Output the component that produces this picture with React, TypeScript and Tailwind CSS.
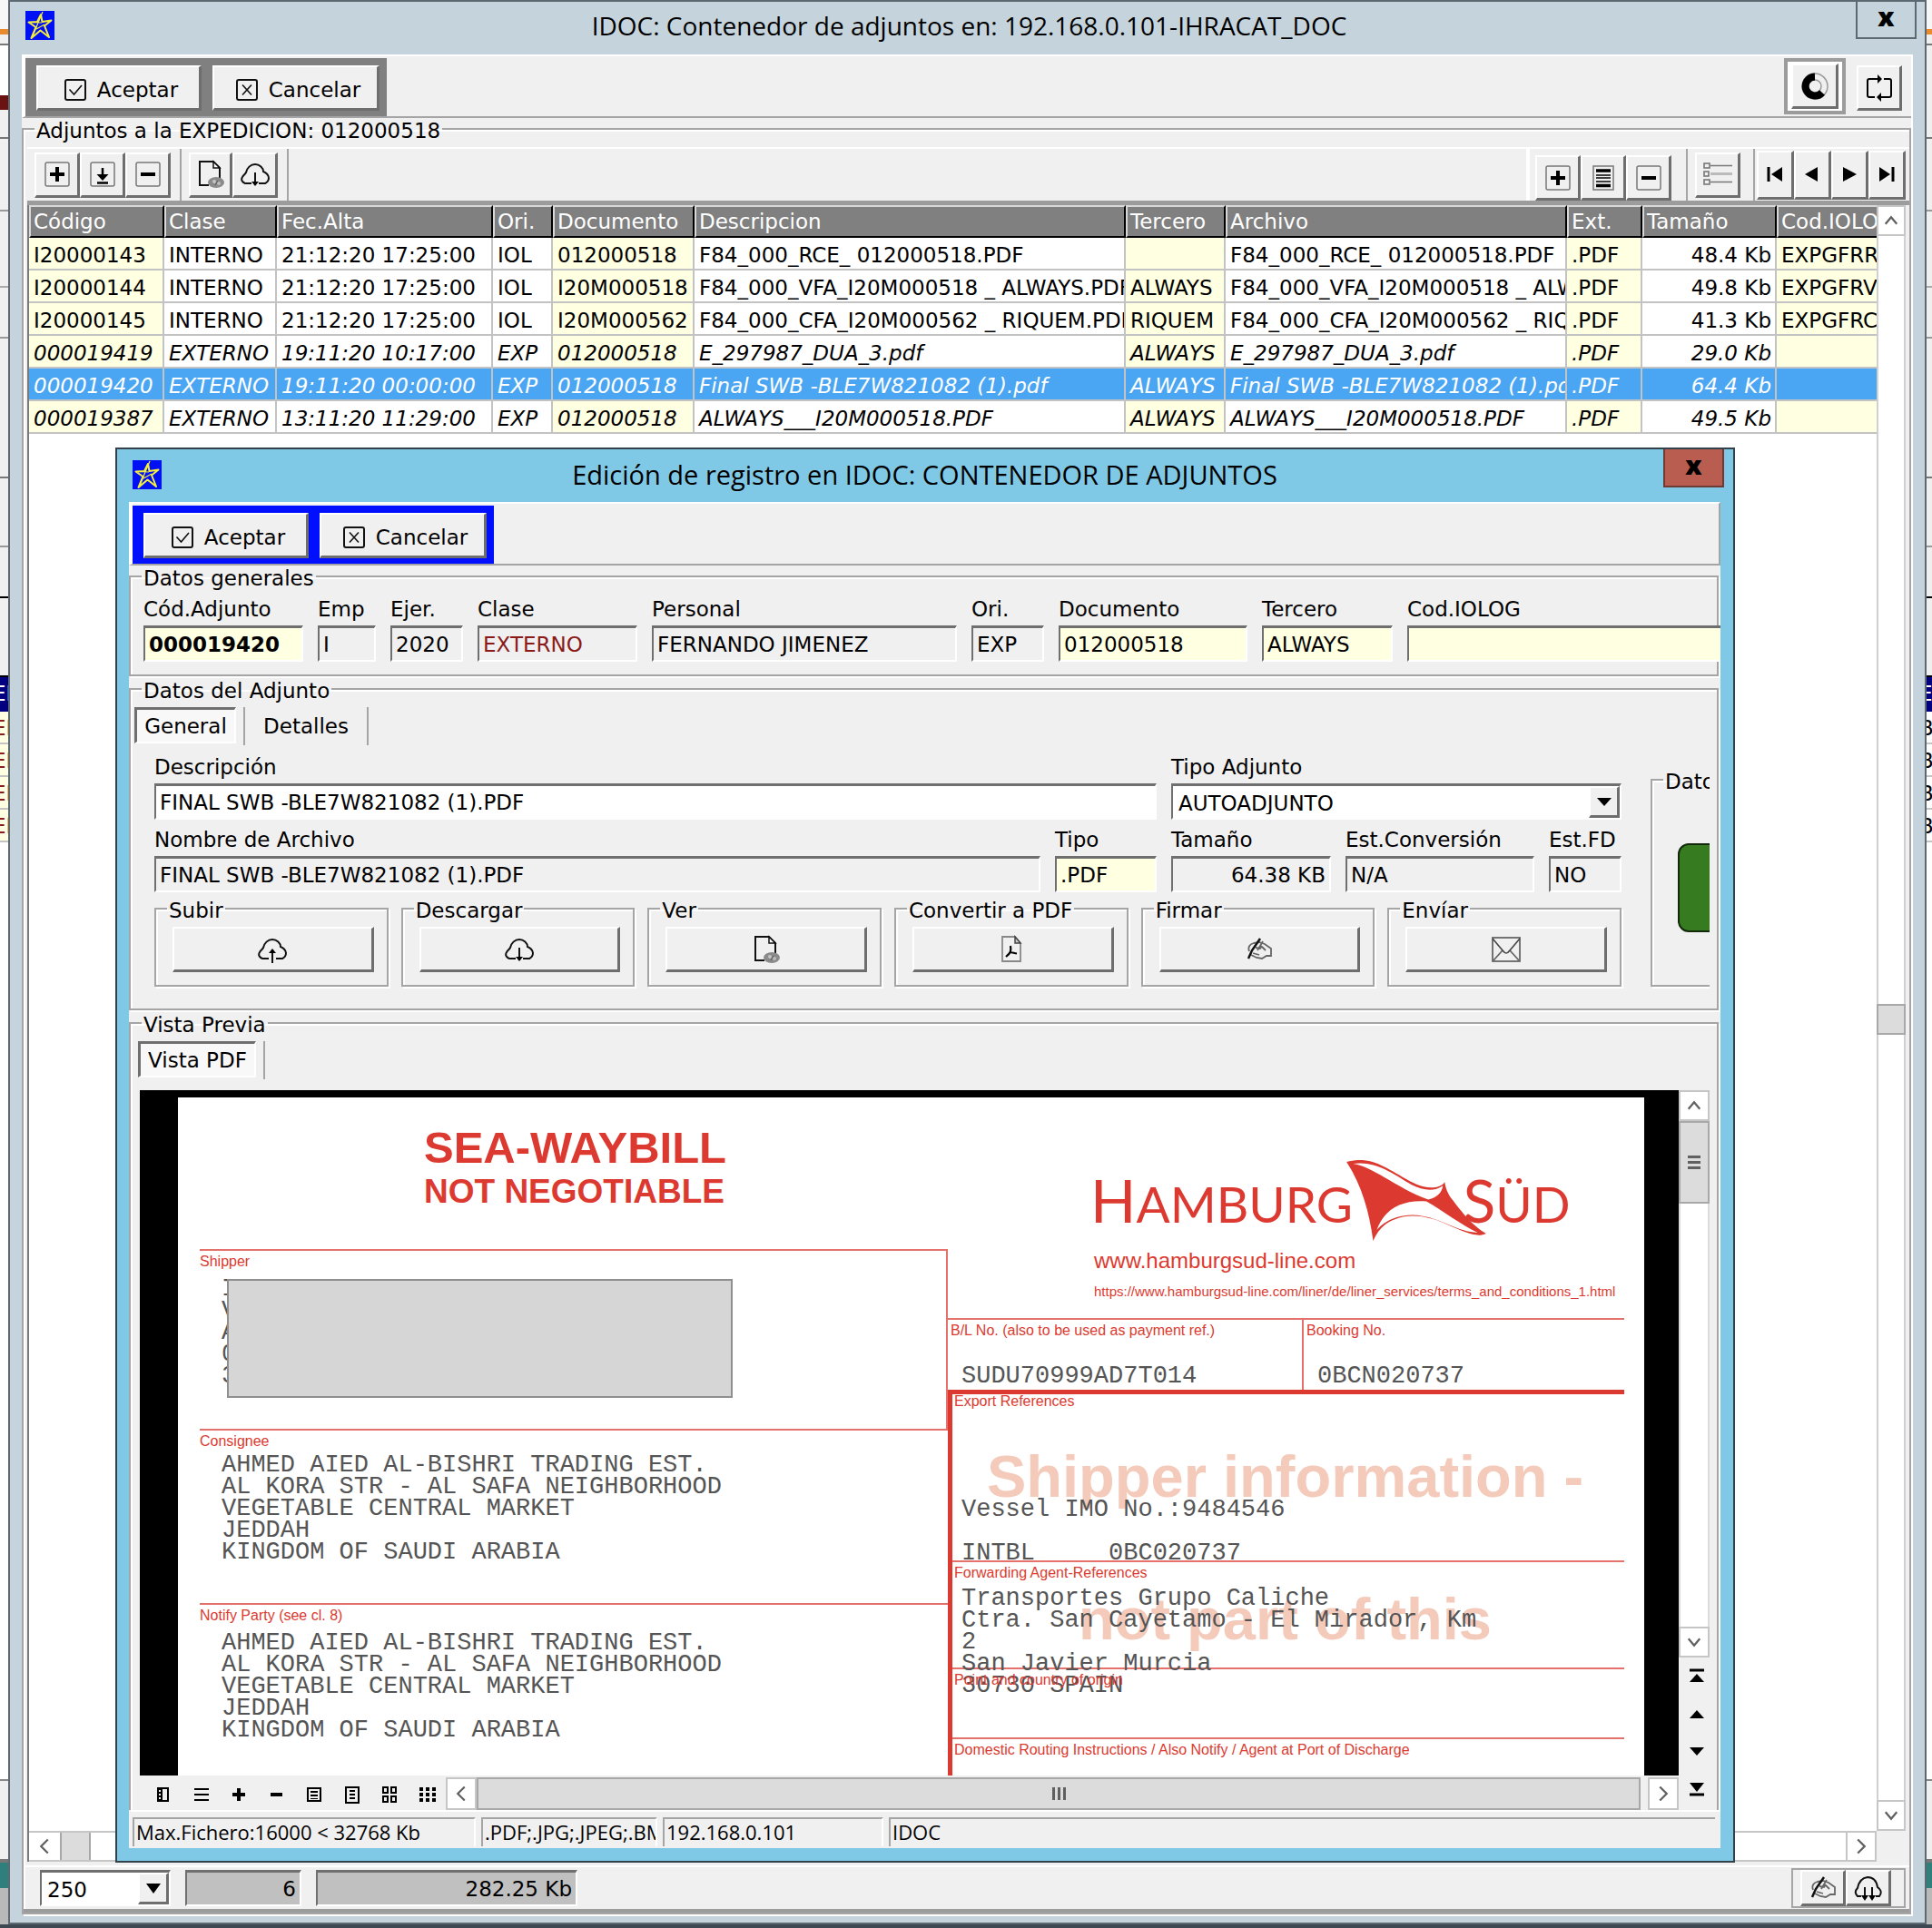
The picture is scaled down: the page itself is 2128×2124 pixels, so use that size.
import React, { useState } from 'react';

const ui = 'font-["DejaVu_Sans",sans-serif] text-[23px] leading-6 text-black';
const raised = 'bg-[#f0f0f0] border-t-2 border-l-2 border-t-white border-l-white border-b-[3px] border-r-[3px] border-b-[#6e6e6e] border-r-[#6e6e6e] flex items-center justify-center shrink-0';
const sunken = 'border-t-[3px] border-l-2 border-t-[#6f6f6f] border-l-[#6f6f6f] border-r-2 border-b-2 border-r-white border-b-white';

/* ---------- Icons ---------- */

const StarIcon = () => (
  <svg className="w-8 h-8 shrink-0 bg-[#0010f5]" viewBox="0 0 32 32" fill="none" stroke="#f5ee3c" strokeWidth="2" strokeLinejoin="round">
    <path d="M17 4l1.500 8 10-1.500-7.500 6 5 12.500-9.500-7.500-10 8.500 5-12-8-5.500 9.500-.5z" />
    <path d="M19 1l-5 12-7 17M4 12.500l14 .5M12 20l9-5" strokeWidth="1.200" />
  </svg>
);

const CheckBoxIcon = () => (
  <svg className="w-6 h-6 shrink-0" viewBox="0 0 24 24" fill="none" stroke="#111">
    <rect x="1" y="1" width="22" height="22" rx="2" strokeWidth="2" />
    <path d="M5.500 11.500l5 5.500 8.500-10" strokeWidth="1.600" />
  </svg>
);

const CrossBoxIcon = () => (
  <svg className="w-6 h-6 shrink-0" viewBox="0 0 24 24" fill="none" stroke="#111">
    <rect x="1" y="1" width="22" height="22" rx="2" strokeWidth="2" />
    <path d="M7 6.500l10 11M17 6.500l-10 11" strokeWidth="1.600" />
  </svg>
);

const BoxIcon = ({ children }: { children: React.ReactNode }) => (
  <svg className="w-7 h-7" viewBox="0 0 28 28">
    <rect x="1" y="1" width="26" height="26" rx="2" fill="none" stroke="#777" strokeWidth="1.500" />
    {children}
  </svg>
);
const PlusIcon = () => <BoxIcon><path d="M6 14h16M14 6v16" stroke="#000" strokeWidth="4" /></BoxIcon>;
const MinusIcon = () => <BoxIcon><path d="M6 14h16" stroke="#000" strokeWidth="4" /></BoxIcon>;
const InsertIcon = () => (
  <BoxIcon><path d="M14 7v9M8 23.500h12" stroke="#000" strokeWidth="2.500" /><path d="M7.500 14h13L14 21z" /></BoxIcon>
);
const RowsIcon = () => (
  <svg className="w-7 h-7" viewBox="0 0 28 28">
    <rect x="3" y="1" width="22" height="26" fill="none" stroke="#777" strokeWidth="1.500" />
    <path d="M6 6h16M6 22.500h16" stroke="#000" strokeWidth="3.500" />
    <path d="M6 11h16M6 14h16M6 18h16" stroke="#000" strokeWidth="1.400" />
  </svg>
);

const DocEyeIcon = () => (
  <svg className="w-8 h-8" viewBox="0 0 32 32">
    <path d="M14 28H4V2h15l7 7v12" fill="none" stroke="#111" strokeWidth="2" />
    <path d="M19 2v7h7z" fill="#fff" stroke="#111" strokeWidth="1.500" />
    <ellipse cx="22" cy="25" rx="9" ry="6" fill="#8a8a8a" />
    <circle cx="20" cy="24" r="2" fill="#c4c4c4" /><circle cx="25" cy="26" r="2" fill="#bbb" /><path d="M21 28l3-5" stroke="#555" />
  </svg>
);

const Cloud = ({ children }: { children?: React.ReactNode }) => (
  <svg className="w-8 h-8" viewBox="0 0 32 32" fill="none" stroke="#111" strokeWidth="2">
    <path d="M12 26H5c-3-1-5-4-3-7 1-2 3-3 4-5 1-5 5-9 10-9s9 4 9 8c3 1 6 4 6 7s-2 5-4 6h-7" />
    {children}
  </svg>
);
const CloudDownIcon = () => <Cloud><path d="M16 14v12" /><path d="M12 24h8l-4 5z" fill="#000" stroke="none" /></Cloud>;
const CloudUpIcon = () => <Cloud><path d="M16 18v13" /><path d="M12 20h8l-4-5z" fill="#000" stroke="none" /></Cloud>;
const CloudSyncIcon = () => (
  <svg className="w-8 h-8" viewBox="0 0 32 32" fill="none" stroke="#111" strokeWidth="2">
    <path d="M8 25H4c-3-3-3-6 0-9 1-5 3-11 11-12 7 0 10 5 11 11 4 3 5 6 2 10h-4" />
    <path d="M12 15v11M20 15v11" /><path d="M8 24h8l-4 6zM16 24h8l-4 6z" fill="#000" stroke="none" />
  </svg>
);

const PdfIcon = () => (
  <svg className="w-8 h-8" viewBox="0 0 32 32" fill="none">
    <path d="M5 2h14l6 7v20H5z" stroke="#888" strokeWidth="1.800" />
    <path d="M19 2v7h6z" fill="#ccc" stroke="#444" strokeWidth="1.500" />
    <path d="M14 12c1 6 0 8-5 12M13 19c2 0 5 1 8 1.500" stroke="#000" strokeWidth="2.200" />
  </svg>
);

const SignIcon = () => (
  <svg className="w-8 h-8" viewBox="0 0 32 32" fill="none" stroke="#666" strokeWidth="1.800">
    <path d="M5 18c-2-5 1-8 5-9l6-1 6 2 7 5v9M7 22l6 3 6 1 5-3h5" />
    <path d="M17 4L8 17l-4 9" stroke="#111" strokeWidth="2.500" />
    <path d="M20 7l-6 10M12 14l5 1 2-3M19 13l4 4M9 20l7 2" />
  </svg>
);

const MailIcon = () => (
  <svg className="w-8 h-8" viewBox="0 0 32 32" fill="none" stroke="#666" strokeWidth="1.800">
    <rect x="1" y="3" width="30" height="26" />
    <path d="M2 28l10-11M30 28L20 17" />
    <path d="M1 4l11 13c3 4 5 4 8 0L31 4" stroke="#444" strokeWidth="1.600" />
  </svg>
);

const RingIcon = () => (
  <svg className="w-8 h-8" viewBox="0 0 32 32" fill="none">
    <circle cx="16" cy="16" r="14" stroke="#999" strokeWidth="1.500" />
    <circle cx="16" cy="16" r="7" stroke="#999" strokeWidth="1.500" />
    <path d="M16 5.500a10.500 10.500 0 1 0 8 17.500" stroke="#000" strokeWidth="8" />
  </svg>
);

const LoopIcon = () => (
  <svg className="w-8 h-8" viewBox="0 0 32 32" fill="none" stroke="#000" strokeWidth="2">
    <path d="M11 26H5a2 2 0 0 1-2-2V8a2 2 0 0 1 2-2h9M21 6h6a2 2 0 0 1 2 2v16a2 2 0 0 1-2 2h-9" />
    <path d="M14 1l5 5-5 5zM18 21l-5 5 5 5z" fill="#000" stroke="none" />
  </svg>
);

const ListIcon = () => (
  <svg className="w-8 h-7" viewBox="0 0 32 28" fill="none" stroke="#777" strokeWidth="1.600">
    <rect x="1" y="2" width="6" height="5" /><rect x="1" y="11" width="5" height="5" /><rect x="1" y="20" width="6" height="5" />
    <path d="M8 4.500h24M8 22.500h24" /><path d="M8 13.500h24" stroke="#bbb" strokeWidth="3" />
  </svg>
);

const Glyph = ({ d, line }: { d: string; line?: string }) => (
  <svg className="w-6 h-6 shrink-0" viewBox="0 0 24 24">
    <path d={d} fill="#000" />
    {line && <path d={line} stroke="#000" strokeWidth="3" fill="none" />}
  </svg>
);

const Chevron = ({ dir }: { dir: 'up' | 'down' | 'left' | 'right' }) => {
  const d = { up: 'M3 11l5-6 5 6', down: 'M3 5l5 6 5-6', left: 'M11 2l-6 6 6 6', right: 'M5 2l6 6-6 6' }[dir];
  return <svg className="w-5 h-5" viewBox="0 0 16 16" fill="none" stroke="#606060" strokeWidth="1.800"><path d={d} /></svg>;
};

const HamburgSudFlag = () => (
  <svg className="w-[158px] h-[91px]" viewBox="0 0 156 90" fill="#dc3a30">
    <path d="M1 2C12 -1 24 -1 35 4c22 9 38 25 58 26 7 0 12-2 15-6 1 8 4 14 9 20 12 16 22 28 36 36-10 5-24-2-36-7-22-11-44-16-62-9-12 4-20 12-25 24C26 58 18 28 1 2zm7 2c22 3 50 28 82 39 10-2 15-8 16-15-10 7-22 5-34-1C54 17 34 0 8 4zm26 72c10-12 30-19 50-15 20 3 38 17 60 18-18-8-38-24-56-34-26-2-46 8-54 31z" fillRule="evenodd" />
  </svg>
);

/* ---------- Shared pieces ---------- */

interface GroupProps {
  title: string;
  className?: string;
  legendClass?: string;
  children?: React.ReactNode;
}

const Group: React.FC<GroupProps> = ({ title, className = '', legendClass = 'ml-3', children }) => (
  <fieldset className={`min-w-0 border-2 border-[#a5a5a5] shadow-[2px_2px_0_#fff,inset_2px_2px_0_#fff] flex flex-col ${className}`}>
    <legend className={`${legendClass} h-6 pt-1 px-0.5 leading-5 whitespace-nowrap`}>{title}</legend>
    {children}
  </fieldset>
);

interface FieldProps {
  label: string;
  value: string;
  width: string;
  tone?: string;
  extra?: string;
}

const Field: React.FC<FieldProps> = ({ label, value, width, tone = 'bg-[#f0f0f0]', extra = '' }) => (
  <label className={`flex flex-col gap-1.5 min-w-0 ${width}`}>
    <span className="whitespace-nowrap">{label}</span>
    <input className={`${sunken} ${tone} ${extra} h-10 w-full px-1 outline-none`} defaultValue={value} />
  </label>
);

const OkCancel = ({ color }: { color: string }) => (
  <div className={`${color} flex gap-3 pl-3 pr-2 py-2`}>
    <button className={`${raised} w-[182px] h-[50px] gap-3 pl-1.5 pt-1`}><CheckBoxIcon />Aceptar</button>
    <button className={`${raised} w-[184px] h-[50px] gap-3 pl-1.5 pt-1`}><CrossBoxIcon />Cancelar</button>
  </div>
);

/* ---------- Grid of attachments ---------- */

const columns = ['Código', 'Clase', 'Fec.Alta', 'Ori.', 'Documento', 'Descripcion', 'Tercero', 'Archivo', 'Ext.', 'Tamaño', 'Cod.IOLOG'];
const yellowCols = [0, 4, 6, 8, 10];

const rows = [
  ['I20000143', 'INTERNO', '21:12:20 17:25:00', 'IOL', '012000518', 'F84_000_RCE_ 012000518.PDF', '', 'F84_000_RCE_ 012000518.PDF', '.PDF', '48.4 Kb', 'EXPGFRRCE'],
  ['I20000144', 'INTERNO', '21:12:20 17:25:00', 'IOL', 'I20M000518', 'F84_000_VFA_I20M000518 _ ALWAYS.PDF', 'ALWAYS', 'F84_000_VFA_I20M000518 _ ALWAYS.PDF', '.PDF', '49.8 Kb', 'EXPGFRVFA'],
  ['I20000145', 'INTERNO', '21:12:20 17:25:00', 'IOL', 'I20M000562', 'F84_000_CFA_I20M000562 _ RIQUEM.PDF', 'RIQUEM', 'F84_000_CFA_I20M000562 _ RIQUEM.PDF', '.PDF', '41.3 Kb', 'EXPGFRCFA'],
  ['000019419', 'EXTERNO', '19:11:20 10:17:00', 'EXP', '012000518', 'E_297987_DUA_3.pdf', 'ALWAYS', 'E_297987_DUA_3.pdf', '.PDF', '29.0 Kb', ''],
  ['000019420', 'EXTERNO', '19:11:20 00:00:00', 'EXP', '012000518', 'Final SWB -BLE7W821082 (1).pdf', 'ALWAYS', 'Final SWB -BLE7W821082 (1).pdf', '.PDF', '64.4 Kb', ''],
  ['000019387', 'EXTERNO', '13:11:20 11:29:00', 'EXP', '012000518', 'ALWAYS___I20M000518.PDF', 'ALWAYS', 'ALWAYS___I20M000518.PDF', '.PDF', '49.5 Kb', ''],
];

const AttachmentTable = () => {
  const [selected, setSelected] = useState(4);
  return (
    <table className="w-full table-fixed border-separate border-spacing-0">
      <colgroup>
        <col className="w-[149px]" /><col className="w-[124px]" /><col className="w-[238px]" /><col className="w-[66px]" />
        <col className="w-[156px]" /><col /><col className="w-[110px]" /><col className="w-[376px]" />
        <col className="w-[83px]" /><col className="w-[148px]" /><col className="w-[110px]" />
      </colgroup>
      <thead>
        <tr>
          {columns.map(c => (
            <th key={c} className="h-9 bg-[#808080] text-white text-left font-normal pl-[3px] overflow-hidden whitespace-nowrap border-t-2 border-l-2 border-t-[#d8d8d8] border-l-[#d8d8d8] border-b-2 border-r-2 border-b-black border-r-black last:border-r-0">{c}</th>
          ))}
        </tr>
      </thead>
      <tbody>
        {rows.map((r, ri) => (
          <tr key={r[0]} onClick={() => setSelected(ri)} className={`${ri > 2 ? 'italic' : ''} ${ri === selected ? 'bg-[#4aa5f2] text-white' : ''}`}>
            {r.map((cell, ci) => (
              <td key={ci} className={`h-9 pl-[5px] pt-[3px] overflow-hidden whitespace-nowrap border-b-2 border-r-2 border-[#c3c3c3] last:border-r-0 ${ci === 9 ? 'text-right pr-1' : ''} ${ri !== selected && yellowCols.includes(ci) ? 'bg-[#ffffe1]' : ''}`}>{cell}</td>
            ))}
          </tr>
        ))}
      </tbody>
    </table>
  );
};

/* ---------- Waybill preview ---------- */

const Caption = ({ children }: { children: React.ReactNode }) => (
  <div className='font-["Liberation_Sans",sans-serif] text-[16px] leading-6 text-[#dc3a30] whitespace-nowrap'>{children}</div>
);

const Typed = ({ lines, className = '' }: { lines: string[]; className?: string }) => (
  <div className={`font-["Liberation_Mono",monospace] text-[27px] leading-6 text-[#555] whitespace-pre ${className}`}>
    {lines.map((l, i) => <div key={i} className="h-6">{l}</div>)}
  </div>
);

const party = ['AHMED AIED AL-BISHRI TRADING EST.', 'AL KORA STR - AL SAFA NEIGHBORHOOD', 'VEGETABLE CENTRAL MARKET', 'JEDDAH', 'KINGDOM OF SAUDI ARABIA'];

const Waybill = () => (
  <div className='font-["Liberation_Sans",sans-serif] bg-white flex-1 h-full flex pl-6 pr-[22px] overflow-hidden'>
    <div className="w-[824px] shrink-0 flex flex-col">
      <div className="h-[167px] pt-7 pl-[247px] text-[#dc3a30] font-bold whitespace-nowrap">
        <div className="text-[49px] leading-[54px]">SEA-WAYBILL</div>
        <div className="text-[37px] leading-10 pt-0.5">NOT NEGOTIABLE</div>
      </div>
      <div className="h-[198px] border-t-2 border-r-2 border-[#e4716b]">
        <Caption>Shipper</Caption>
        <div className="relative">
          <Typed lines={['I', 'V', 'A', '0', '3']} className="pl-6 pt-1.5" />
          <div className="absolute left-[30px] top-[7px] w-[557px] h-[131px] bg-[#d6d6d6] border-2 border-[#8f8f8f]" />
        </div>
      </div>
      <div className="h-[192px] border-t-2 border-[#e4716b]">
        <Caption>Consignee</Caption>
        <Typed lines={party} className="pl-6 pt-0.5" />
      </div>
      <div className="border-t-2 border-[#e4716b]">
        <Caption>Notify Party (see cl. 8)</Caption>
        <Typed lines={party} className="pl-6 pt-1.5" />
      </div>
    </div>
    <div className="flex-1 min-w-0 flex flex-col text-[#dc3a30] relative">
      <div className="h-[243px] pt-[70px] pl-[161px] whitespace-nowrap">
        <div className='font-["Lato",sans-serif] flex items-baseline h-[86px] leading-[86px] relative -ml-1'>
          <span className="text-[66px]">H</span><span className="text-[55px] w-[360px]">AMBURG</span>
          <span className="text-[66px]">S</span><span className="text-[55px]">ÜD</span>
          <div className="absolute left-[281px] -top-px"><HamburgSudFlag /></div>
        </div>
        <div className="text-[24px] leading-6 pt-3">www.hamburgsud-line.com</div>
        <div className="text-[15px] leading-6 pt-2.5">https://www.hamburgsud-line.com/liner/de/liner_services/terms_and_conditions_1.html</div>
      </div>
      <div className="h-[79px] flex border-t-2 border-[#e4716b]">
        <div className="w-[392px] border-r-2 border-[#e4716b] pl-[3px]">
          <Caption>B/L No. (also to be used as payment ref.)</Caption>
          <Typed lines={['SUDU70999AD7T014']} className="pl-3 pt-[26px]" />
        </div>
        <div className="pl-[3px]">
          <Caption>Booking No.</Caption>
          <Typed lines={['0BCN020737']} className="pl-3 pt-[26px]" />
        </div>
      </div>
      <div className="flex-1 border-t-[5px] border-l-[5px] border-[#dc3a30]">
        <div className="absolute left-[43px] top-[386px] text-[65px] leading-[64px] font-bold text-[#f4cabb] whitespace-nowrap">Shipper information -</div>
        <div className="absolute left-[144px] top-[543px] text-[65px] leading-[64px] font-bold text-[#f4cabb] whitespace-nowrap">not part of this</div>
        <div className="relative -mt-1">
          <div className="h-[187px] pl-0.5">
            <Caption>Export References</Caption>
            <Typed lines={['Vessel IMO No.:9484546', '', 'INTBL     0BC020737']} className="pl-2 pt-[95px]" />
          </div>
          <div className="h-[118px] border-t-2 border-[#e4716b] pl-0.5">
            <Caption>Forwarding Agent-References</Caption>
            <Typed lines={['Transportes Grupo Caliche', 'Ctra. San Cayetamo - El Mirador, Km', '2', 'San Javier Murcia', '30730 SPAIN']} className="pl-2 pt-1" />
          </div>
          <div className="h-[77px] border-t-2 border-[#e4716b] pl-0.5">
            <Caption>Point and country of origin</Caption>
          </div>
          <div className="border-t-2 border-[#e4716b] pl-0.5">
            <Caption>Domestic Routing Instructions / Also Notify / Agent at Port of Discharge</Caption>
          </div>
        </div>
      </div>
    </div>
  </div>
);

/* ---------- Edit dialog ---------- */

const actions = [
  { name: 'Subir', icon: <CloudUpIcon /> },
  { name: 'Descargar', icon: <CloudDownIcon /> },
  { name: 'Ver', icon: <DocEyeIcon /> },
  { name: 'Convertir a PDF', icon: <PdfIcon /> },
  { name: 'Firmar', icon: <SignIcon /> },
  { name: 'Envíar', icon: <MailIcon /> },
];

const pageTools = [
  { name: 'Panel', d: 'M5 4h13v16H5zM11 6v12h5V6zM7 7v2h2V7zM7 11v2h2v-2zM7 15v2h2v-2z' },
  { name: 'Lista', d: 'M4 5h16v2H4zM4 11h16v2H4zM4 17h16v2H4z' },
  { name: 'Acercar', d: 'M10 5h4v5h5v4h-5v5h-4v-5H5v-4h5z' },
  { name: 'Alejar', d: 'M5 10h13v4H5z' },
  { name: 'Ancho', d: 'M4 4h16v16H4zM6 6v12h12V6zM8 8h8v2H8zM8 12h8v2H8zM8 16h8v1H8z' },
  { name: 'Pagina', d: 'M4 3h16v19H4zM6 5v15h12V5zM9 7h6v2H9zM9 11h6v2H9zM9 15h6v2H9z' },
  { name: 'Cuatro', d: 'M4 3h7v8H4zM6 5v4h3V5zM13 3h7v8h-7zM15 5v4h3V5zM4 13h7v8H4zM6 15v4h3v-4zM13 13h7v8h-7zM15 15v4h3v-4z' },
  { name: 'Mosaico', d: 'M3 4h4v4H3zM10 4h4v4h-4zM17 4h4v4h-4zM3 10h4v4H3zM10 10h4v4h-4zM17 10h4v4h-4zM3 16h4v4H3zM10 16h4v4h-4zM17 16h4v4h-4z' },
];

const scrollBtn = 'bg-white border-2 border-[#c6c6c6] flex items-center justify-center shrink-0';
const tab = 'border-t-[3px] border-l-[3px] border-[#6f6f6f] border-r-2 border-b-2 border-r-white border-b-white bg-[#f8f8f8] h-10';

const EditDialog = () => (
  <div className={`${ui} absolute left-[127px] right-[217px] top-[493px] bottom-[72px] bg-[#80c9e6] border-2 border-[#33424a] pl-[13px] pr-3.5 pb-3.5 flex flex-col`}>
    <header className="h-[58px] shrink-0 flex items-start relative">
      <div className="pl-1 pt-3"><StarIcon /></div>
      <h2 className='font-["Open_Sans",sans-serif] text-[29px] leading-8 flex-1 text-center pt-3 pr-9'>Edición de registro en IDOC: CONTENEDOR DE ADJUNTOS</h2>
      <button className='absolute -right-1 top-0 w-[67px] h-[42px] bg-[#b95d50] border-2 border-t-0 border-[#6d3a34] font-["Open_Sans",sans-serif] font-extrabold text-[29px] leading-8 pb-1.5'>x</button>
    </header>
    <div className="flex-1 min-h-0 bg-[#f0f0f0] flex flex-col overflow-hidden">
      <div className="h-[70px] shrink-0 border-t-2 border-l-4 border-white border-b-2 border-b-[#a5a5a5] border-r-2 border-r-[#a5a5a5] flex items-start pt-0.5">
        <OkCancel color="bg-[#0010ff] h-[64px]" />
      </div>

      <Group title="Datos generales" className="mr-0.5 h-[122px] shrink-0">
        <div className="flex gap-4 pt-3 pl-3.5 -mr-2">
          <Field label="Cód.Adjunto" value="000019420" width="w-44 shrink-0" tone="bg-[#ffffe1]" extra="font-bold" />
          <Field label="Emp" value="I" width="w-16 shrink-0" />
          <Field label="Ejer." value="2020" width="w-20 shrink-0" />
          <Field label="Clase" value="EXTERNO" width="w-44 shrink-0" extra="text-[#8b1a1a]" />
          <Field label="Personal" value="FERNANDO JIMENEZ" width="w-[336px] shrink-0" />
          <Field label="Ori." value="EXP" width="w-20 shrink-0" />
          <Field label="Documento" value="012000518" width="w-52 shrink-0" tone="bg-[#ffffe1]" />
          <Field label="Tercero" value="ALWAYS" width="w-36 shrink-0" tone="bg-[#ffffe1]" />
          <Field label="Cod.IOLOG" value="" width="flex-1" tone="bg-[#ffffe1]" />
        </div>
      </Group>

      <Group title="Datos del Adjunto" className="mr-0.5 mt-0.5 h-[366px] shrink-0">
        <div className="flex mt-2 pl-1 h-[42px] shrink-0">
          <button className={`${tab} w-28 mr-2`}>General</button>
          <button className="border-x-2 border-[#a5a5a5] w-[138px]">Detalles</button>
        </div>
        <div className="flex gap-8 pl-[26px] mr-2 pt-3 overflow-hidden">
          <div className="flex-1 min-w-0 flex flex-col">
            <div className="flex gap-4">
              <Field label="Descripción" value="FINAL SWB -BLE7W821082 (1).PDF" width="flex-1" tone="bg-white" />
              <label className="flex flex-col gap-1.5 w-[496px]">
                <span>Tipo Adjunto</span>
                <div className="relative">
                  <select className={`${sunken} bg-white h-10 w-full pl-1.5 pt-0.5 appearance-none outline-none`}>
                    <option>AUTOADJUNTO</option>
                  </select>
                  <span className={`${raised} absolute right-0.5 top-[3px] w-[34px] h-[35px] pointer-events-none`}><Glyph d="M4 8h16l-8 9z" /></span>
                </div>
              </label>
            </div>
            <div className="flex gap-4 mt-2.5">
              <Field label="Nombre de Archivo" value="FINAL SWB -BLE7W821082 (1).PDF" width="flex-1" />
              <Field label="Tipo" value=".PDF" width="w-28" tone="bg-[#ffffe1]" />
              <Field label="Tamaño" value="64.38 KB" width="w-44" extra="text-right" />
              <Field label="Est.Conversión" value="N/A" width="w-52" />
              <Field label="Est.FD" value="NO" width="w-20" />
            </div>
            <div className="grid grid-cols-6 gap-3.5 mt-1.5 pb-1">
              {actions.map(a => (
                <Group key={a.name} title={a.name} className="h-[98px]" legendClass="ml-3">
                  <button aria-label={a.name} className={`${raised} h-[50px] mt-2 ml-[18px] mr-3.5`}>{a.icon}</button>
                </Group>
              ))}
            </div>
          </div>
          <Group title="Datos" className="w-[65px] mt-3.5 h-[240px] border-r-0 overflow-hidden">
            <div className="ml-7 mt-[58px] w-24 h-[98px] bg-[#377b21] border-2 border-[#122a0b] rounded-xl" />
          </Group>
        </div>
      </Group>

      <Group title="Vista Previa" className="mr-0.5 mt-0.5 flex-1 min-h-0 border-b-0">
        <div className="flex mt-2 pl-2 h-[42px] shrink-0">
          <button className={`${tab} w-[130px] mr-2`}>Vista PDF</button>
          <div className="border-l-2 border-[#a5a5a5]" />
        </div>
        <div className="flex flex-1 min-h-0 mt-3 pl-2.5 pr-2">
          <div className="flex-1 min-w-0 flex flex-col">
            <div className="flex-1 min-h-0 bg-black flex pl-[42px] pr-[38px] pt-2">
              <Waybill />
            </div>
            <div className="h-9 mt-0.5 flex shrink-0">
              <div className="flex items-center justify-between w-[337px] pl-3.5 pr-2 pt-0.5">
                {pageTools.map(t => (
                  <button key={t.name} aria-label={t.name}>
                    <svg className="w-6 h-6" viewBox="0 0 24 24" fillRule="evenodd"><path d={t.d} /></svg>
                  </button>
                ))}
              </div>
              <button aria-label="Izquierda" className={`${scrollBtn} w-[34px]`}><Chevron dir="left" /></button>
              <div className="flex-1 bg-[#dcdcdc] border-2 border-[#a8a8a8] flex items-center justify-center gap-[3px]">
                {[0, 1, 2].map(i => <i key={i} className="w-[3px] h-3.5 bg-[#606060]" />)}
              </div>
              <button aria-label="Derecha" className={`${scrollBtn} w-[34px] ml-2`}><Chevron dir="right" /></button>
            </div>
          </div>
          <div className="w-[34px] flex flex-col">
            <button aria-label="Subir vista" className={`${scrollBtn} h-[34px]`}><Chevron dir="up" /></button>
            <div className="h-[91px] bg-[#dcdcdc] border-2 border-[#a8a8a8] flex flex-col items-center justify-center gap-[3px]">
              {[0, 1, 2].map(i => <i key={i} className="w-3.5 h-[3px] bg-[#606060]" />)}
            </div>
            <div className="flex-1 bg-white border-x-2 border-[#dcdcdc]" />
            <button aria-label="Bajar vista" className={`${scrollBtn} h-[34px]`}><Chevron dir="down" /></button>
            <div className="h-[168px] flex flex-col items-center justify-between pt-2 pb-2.5 pl-1.5">
              <Glyph d="M4 19h16l-8-9z" line="M4 6h16" />
              <Glyph d="M4 17h16l-8-9z" />
              <Glyph d="M4 7h16l-8 9z" />
              <Glyph d="M4 4h16l-8 10z" line="M4 17h16" />
            </div>
          </div>
        </div>
      </Group>

      <footer className='font-["Open_Sans",sans-serif] text-[22px] leading-7 h-8 mt-2 shrink-0 flex gap-1.5 pl-1 pr-1.5 mb-0.5 whitespace-nowrap'>
        <span className="w-[378px] border-t-2 border-l-2 border-[#a5a5a5] border-r-2 border-r-white pl-0.5">Max.Fichero:16000 &lt; 32768 Kb</span>
        <span className="w-[194px] border-t-2 border-l-2 border-[#a5a5a5] border-r-2 border-r-white pl-0.5 overflow-hidden">.PDF;.JPG;.JPEG;.BMP</span>
        <span className="w-[243px] border-t-2 border-l-2 border-[#a5a5a5] border-r-2 border-r-white pl-0.5">192.168.0.101</span>
        <span className="flex-1 border-t-2 border-l-2 border-[#a5a5a5] pl-0.5">IDOC</span>
      </footer>
    </div>
  </div>
);

/* ---------- Slices of the window behind ---------- */

const BackStrip = ({ side }: { side: 'left' | 'right' }) => (
  <div className={`${side === 'left' ? 'w-[9px]' : 'w-1.5'} ${ui} shrink-0 bg-[#f0f0f0] flex flex-col overflow-hidden`}>
    <div className="h-8 bg-[#f7f7f7]" />
    <div className="h-1.5 bg-[#e98a2d]" />
    <div className="h-3 border-b-2 border-[#777]" />
    <div className={`h-[55px] ${side === 'left' ? 'bg-white' : ''}`} />
    <div className={`h-4 ${side === 'left' ? 'bg-[#6b1212]' : ''}`} />
    <div className="h-8 border-b-2 border-[#777]" />
    <div className="h-20 border-b-2 border-[#999]" />
    <div className="h-[84px] border-b-2 border-[#aaa]" />
    <div className="h-14 border-b-2 border-[#999]" />
    <div className="h-[154px] border-b-2 border-[#777]" />
    <div className="h-[76px] border-b-2 border-[#999]" />
    <div className="h-14 border-b-2 border-black" />
    <div className="h-[87px] border-b-2 border-black" />
    <div className="h-[38px] bg-[#000080] text-white leading-9 -indent-2">EI</div>
    {[0, 1, 2, 3].map(i => (
      <div key={i} className={`h-9 border-b-2 border-[#c3c3c3] leading-9 -indent-2 ${side === 'left' ? 'bg-[#ffffe1] text-[#8b1a1a]' : 'bg-white'}`}>{side === 'left' ? 'EI' : 'B'}</div>
    ))}
    <div className="flex-1 bg-white border-b-2 border-[#888]" />
    <div className="h-[90px] border-b-4 border-[#777]" />
    <div className="h-7 bg-[#2f7f7c]" />
    <div className="h-10 bg-[#b9b9b9]" />
  </div>
);

const navButtons = [
  { name: 'Primero', d: 'M20 4v16L8 12z', line: 'M5 4v16' },
  { name: 'Anterior', d: 'M18 4v16L4 12z' },
  { name: 'Siguiente', d: 'M5 4v16l15-8z' },
  { name: 'Ultimo', d: 'M4 4v16l12-8z', line: 'M19 4v16' },
];

const App: React.FC = () => (
  <div className={`${ui} min-h-screen bg-[#3d4852] flex relative pb-1`}>
    <BackStrip side="left" />
    <div className="flex-1 min-w-0 bg-[#c5d4dc] border-2 border-[#5d6970] pl-[13px] pr-[13px] pb-[9px] flex flex-col">
      <header className="h-[58px] shrink-0 flex items-start relative">
        <div className="pl-1 pt-2.5"><StarIcon /></div>
        <h1 className='font-["Open_Sans",sans-serif] text-[28px] leading-8 flex-1 text-center pt-2.5 pr-8'>IDOC: Contenedor de adjuntos en: 192.168.0.101-IHRACAT_DOC</h1>
        <button className='absolute -right-1 -top-0.5 w-[67px] h-[43px] border-2 border-[#5d6970] font-["Open_Sans",sans-serif] font-extrabold text-[29px] leading-8 pb-2'>x</button>
      </header>

      <main className="flex-1 bg-[#f0f0f0] flex flex-col border-r-2 border-white">
        <div className="h-[70px] shrink-0 border-t-2 border-l-4 border-white border-b-2 border-b-[#a5a5a5] flex items-start pt-0.5">
          <OkCancel color="bg-[#808080] h-[64px]" />
          <div className="flex-1" />
          <div className="w-[68px] h-[62px] border-4 border-[#9c9c9c] bg-white flex items-center justify-center">
            <button aria-label="Estado" className={`${raised} w-[52px] h-[50px]`}><RingIcon /></button>
          </div>
          <button aria-label="Refrescar" className={`${raised} w-[50px] h-[50px] mt-2 ml-3 mr-2.5`}><LoopIcon /></button>
        </div>

        <Group title="Adjuntos a la EXPEDICION: 012000518" className="flex-1">
          <div className="mt-2 h-16 shrink-0 ml-1 border-t-2 border-t-white border-b-[5px] border-b-[#9c9c9c] flex items-stretch">
            <div className="flex items-center pl-2 pr-2.5 border-r-2 border-[#a5a5a5]">
              <button aria-label="Nuevo" className={`${raised} w-[50px] h-[50px]`}><PlusIcon /></button>
              <button aria-label="Insertar" className={`${raised} w-[50px] h-[50px]`}><InsertIcon /></button>
              <button aria-label="Eliminar" className={`${raised} w-[50px] h-[50px]`}><MinusIcon /></button>
            </div>
            <div className="flex items-center pl-2 pr-2.5 border-r-2 border-[#a5a5a5]">
              <button aria-label="Ver" className={`${raised} w-12 h-[50px]`}><DocEyeIcon /></button>
              <button aria-label="Descargar" className={`${raised} w-[50px] h-[50px]`}><CloudDownIcon /></button>
            </div>
            <div className="flex-1" />
            <div className="flex items-end pl-1.5 pr-4 border-l-4 border-l-white border-r-2 border-r-[#a5a5a5]">
              <button aria-label="Expandir" className={`${raised} w-[50px] h-[50px]`}><PlusIcon /></button>
              <button aria-label="Filas" className={`${raised} w-[50px] h-[50px]`}><RowsIcon /></button>
              <button aria-label="Contraer" className={`${raised} w-[50px] h-[50px]`}><MinusIcon /></button>
            </div>
            <div className="flex items-center pl-2 pr-3.5 border-r-2 border-[#a5a5a5]">
              <button aria-label="Lista" className={`${raised} w-[50px] h-[50px]`}><ListIcon /></button>
            </div>
            <div className="flex items-center pl-0.5 pr-1">
              {navButtons.map(b => (
                <button key={b.name} aria-label={b.name} className={`${raised} w-[41px] h-[54px]`}><Glyph d={b.d} line={b.line} /></button>
              ))}
            </div>
          </div>

          <div className="flex-1 flex ml-1 mr-1 border-l-2 border-[#7a7a7a]">
            <div className="flex-1 min-w-0 flex flex-col">
              <div className="flex-1 bg-white overflow-hidden"><AttachmentTable /></div>
              <div className="h-[34px] flex bg-white border-y-2 border-[#c6c6c6]">
                <button aria-label="Izquierda" className="w-[34px] flex items-center justify-center"><Chevron dir="left" /></button>
                <div className="w-[34px] bg-[#dcdcdc] border-x-2 border-[#a8a8a8]" />
                <div className="flex-1" />
                <button aria-label="Derecha" className="w-[34px] border-x-2 border-[#c6c6c6] flex items-center justify-center"><Chevron dir="right" /></button>
              </div>
            </div>
            <div className="w-8 flex flex-col pb-[34px]">
              <button aria-label="Arriba" className={`${scrollBtn} h-[34px]`}><Chevron dir="up" /></button>
              <div className="flex-[846] bg-white border-x-2 border-[#d0d0d0]" />
              <div className="h-[34px] bg-[#dcdcdc] border-2 border-[#a8a8a8]" />
              <div className="flex-[844] bg-white border-x-2 border-[#d0d0d0]" />
              <button aria-label="Abajo" className={`${scrollBtn} h-[34px]`}><Chevron dir="down" /></button>
            </div>
          </div>

          <div className="h-[52px] shrink-0 mt-1 border-t-2 border-t-white border-b-4 border-b-[#9c9c9c] flex items-center pl-[18px] pr-1">
            <div className="relative w-[144px]">
              <select aria-label="Registros" className={`${sunken} bg-white h-10 w-full pl-1.5 pt-0.5 appearance-none outline-none`}>
                <option>250</option>
              </select>
              <span className={`${raised} absolute right-0.5 top-[3px] w-[34px] h-[35px] pointer-events-none`}><Glyph d="M4 7h16l-8 11z" /></span>
            </div>
            <output className={`${sunken} bg-[#c0c0c0] h-10 w-32 ml-4 pr-1 leading-9 text-right`}>6</output>
            <output className={`${sunken} bg-[#c0c0c0] h-10 w-72 ml-4 pr-1 leading-9 text-right`}>282.25 Kb</output>
            <div className="flex-1" />
            <div className="border-2 border-[#a5a5a5] h-11 flex items-center pl-2 pr-3.5">
              <button aria-label="Firmar" className={`${raised} w-[50px] h-10`}><SignIcon /></button>
              <button aria-label="Sincronizar" className={`${raised} w-[50px] h-10`}><CloudSyncIcon /></button>
            </div>
          </div>
        </Group>
      </main>
    </div>
    <BackStrip side="right" />
    <EditDialog />
  </div>
);

export default App;
